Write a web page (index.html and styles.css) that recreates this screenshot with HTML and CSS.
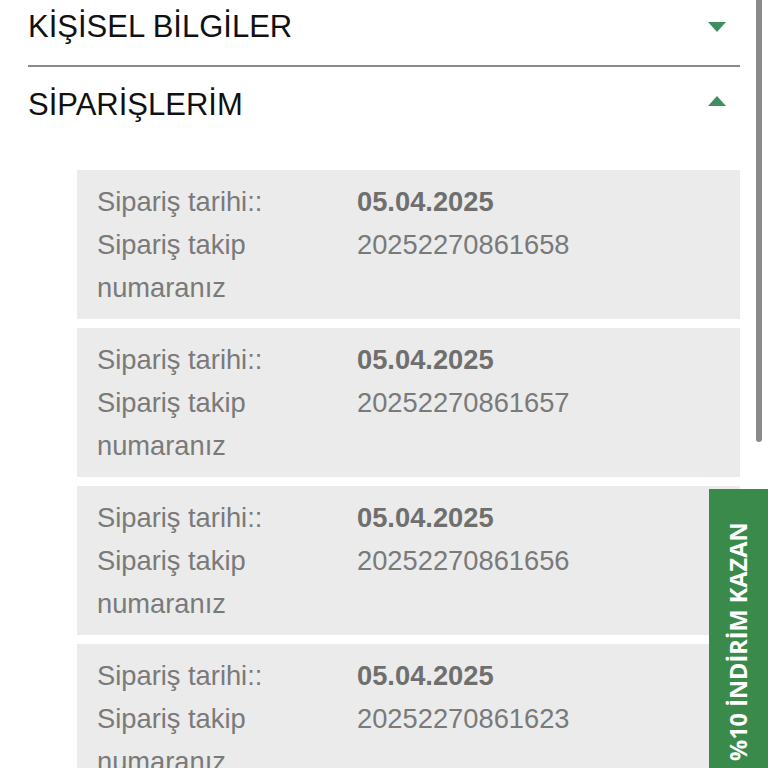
FILE: index.html
```html
<!DOCTYPE html>
<html lang="tr">
<head>
<meta charset="utf-8">
<link rel="stylesheet" href="styles.css">
</head>
<body>
<div class="page">
  <div class="accordion">
    <div class="acc-head">
      <span class="acc-title">KİŞİSEL BİLGİLER</span>
      <span class="tri tri-down"></span>
    </div>
    <div class="acc-head open">
      <span class="acc-title">SİPARİŞLERİM</span>
      <span class="tri tri-up"></span>
    </div>
    <div class="orders">
      <div class="order">
        <div class="lbl">Sipariş tarihi::</div><div class="val date">05.04.2025</div>
        <div class="lbl">Sipariş takip numaranız</div><div class="val">20252270861658</div>
      </div>
      <div class="order">
        <div class="lbl">Sipariş tarihi::</div><div class="val date">05.04.2025</div>
        <div class="lbl">Sipariş takip numaranız</div><div class="val">20252270861657</div>
      </div>
      <div class="order">
        <div class="lbl">Sipariş tarihi::</div><div class="val date">05.04.2025</div>
        <div class="lbl">Sipariş takip numaranız</div><div class="val">20252270861656</div>
      </div>
      <div class="order">
        <div class="lbl">Sipariş tarihi::</div><div class="val date">05.04.2025</div>
        <div class="lbl">Sipariş takip numaranız</div><div class="val">20252270861623</div>
      </div>
    </div>
  </div>
</div>
<div class="scrollbar"></div>
<div class="promo"><span class="promo-text">%10 İNDİRİM KAZAN</span></div>
</body>
</html>
```

FILE: styles.css
```css
html, body {
  margin: 0;
  padding: 0;
  background: #ffffff;
  overflow: hidden;
  height: 768px;
}
.page {
  width: 768px;
  height: 768px;
  overflow: hidden;
}
.accordion {
  margin: -11px 28px 0 28px;
}
.acc-head {
  display: flex;
  align-items: center;
  justify-content: space-between;
  padding: 23px 14px 23px 0;
  border-bottom: 2px solid #8a8a8a;
}
.acc-head.open {
  border-bottom: none;
}
.acc-title {
  font-family: "Liberation Sans", Arial, sans-serif;
  font-size: 31px;
  line-height: 30px;
  color: #111111;
}
.tri {
  width: 0;
  height: 0;
  border-left: 9px solid transparent;
  border-right: 9px solid transparent;
}
.tri-down {
  border-top: 10px solid #3f8f60;
}
.tri-up {
  border-bottom: 10px solid #3f8f60;
  margin-bottom: 8px;
}
.orders {
  display: flex;
  flex-direction: column;
  gap: 9px;
  padding: 27px 0 0 49px;
}
.order {
  background: #ebebeb;
  display: grid;
  grid-template-columns: 260px 1fr;
  padding: 10px 20px;
  font-family: "Liberation Sans", Arial, sans-serif;
  font-size: 27.3px;
  line-height: 43px;
  color: #7a7a7a;
}
.val.date {
  font-weight: bold;
  color: #6f6f6f;
}
.scrollbar {
  position: absolute;
  left: 756px;
  top: 0;
  width: 6px;
  height: 442px;
  background: #8a8a8a;
  border-radius: 0 0 3px 3px;
}
.promo {
  position: absolute;
  left: 709px;
  top: 489px;
  width: 59px;
  height: 300px;
  background: #3a8a4b;
  display: flex;
  justify-content: center;
  padding-top: 33px;
  box-sizing: border-box;
}
.promo-text {
  writing-mode: vertical-rl;
  transform: rotate(180deg);
  font-family: "Open Sans", sans-serif;
  font-weight: 700;
  font-size: 23.5px;
  line-height: 59px;
  color: #ffffff;
  white-space: nowrap;
  height: 240px;
  text-align: right;
}
```
